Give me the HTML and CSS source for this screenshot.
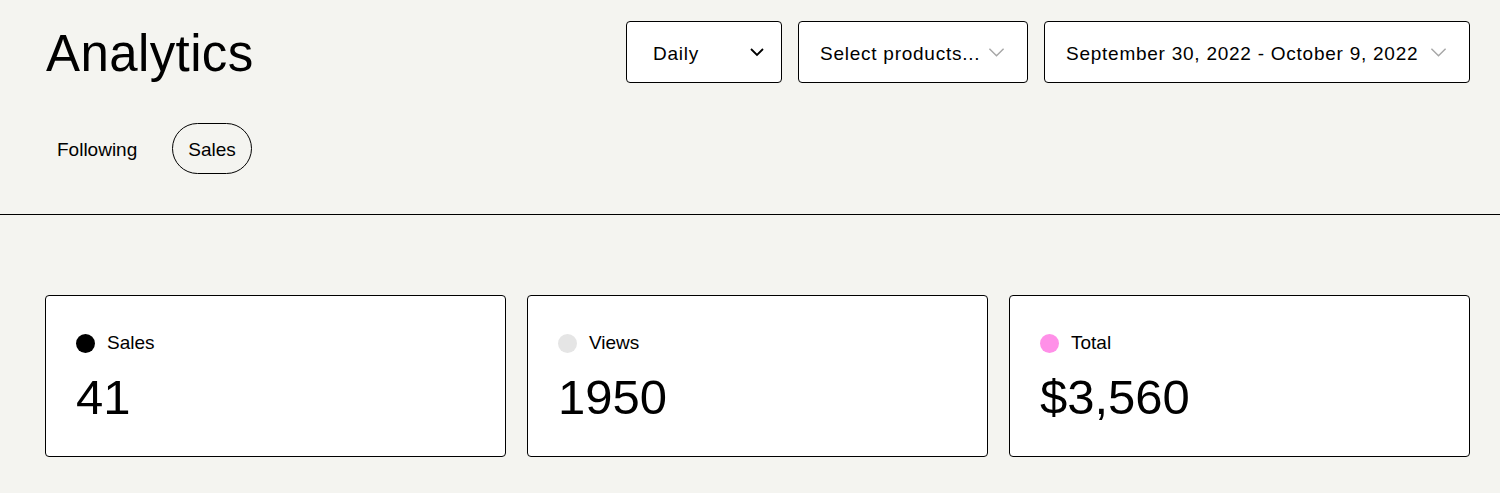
FILE: index.html
```html
<!DOCTYPE html>
<html lang="en">
<head>
<meta charset="utf-8">
<title>Analytics</title>
<link rel="stylesheet" href="styles.css">
</head>
<body>
<header class="page-header">
  <div class="header-row">
    <h1 class="title">Analytics</h1>
    <div class="filters">
      <div class="select select-daily">
        <span class="select-text">Daily</span>
        <svg class="chev chev-dark" viewBox="0 0 16 10" width="16" height="10"><path d="M2 2l6 6 6-6" fill="none" stroke="currentColor" stroke-width="1.8"/></svg>
      </div>
      <div class="select select-products">
        <span class="select-text">Select products...</span>
        <svg class="chev chev-light" viewBox="0 0 18 10" width="17" height="10"><path d="M1.5 1.5l7.5 7.5 7.5-7.5" fill="none" stroke="currentColor" stroke-width="1.5"/></svg>
      </div>
      <div class="select select-date">
        <span class="select-text">September 30, 2022 - October 9, 2022</span>
        <svg class="chev chev-light" viewBox="0 0 18 10" width="17" height="10"><path d="M1.5 1.5l7.5 7.5 7.5-7.5" fill="none" stroke="currentColor" stroke-width="1.5"/></svg>
      </div>
    </div>
  </div>
  <nav class="tabs">
    <a class="tab">Following</a>
    <a class="tab tab-active">Sales</a>
  </nav>
</header>
<main class="content">
  <section class="stats">
    <div class="card">
      <div class="card-label"><span class="dot dot-black"></span>Sales</div>
      <div class="card-value">41</div>
    </div>
    <div class="card">
      <div class="card-label"><span class="dot dot-gray"></span>Views</div>
      <div class="card-value">1950</div>
    </div>
    <div class="card">
      <div class="card-label"><span class="dot dot-pink"></span>Total</div>
      <div class="card-value">$3,560</div>
    </div>
  </section>
</main>
</body>
</html>
```

FILE: styles.css
```css
* { box-sizing: border-box; }

html, body {
  margin: 0;
  padding: 0;
  background: #f4f4f0;
  color: #000;
  font-family: "Liberation Sans", Arial, sans-serif;
}

.page-header {
  padding: 21px 30px 40px 46px;
  border-bottom: 1px solid #000;
}

.header-row {
  display: flex;
  justify-content: space-between;
  align-items: flex-start;
}

.title {
  margin: 0;
  font-weight: 400;
  font-size: 51px;
  letter-spacing: 0.4px;
  line-height: 66px;
}

.filters {
  display: flex;
  gap: 16px;
  margin-left: auto;
}

.select {
  display: flex;
  align-items: center;
  justify-content: space-between;
  height: 62px;
  background: #fff;
  border: 1px solid #000;
  border-radius: 4px;
  font-size: 19px;
  letter-spacing: 0.75px;
  padding: 0 22px 0 21px;
}

.select-text {
  padding-top: 3px;
}

.select-daily {
  width: 156px;
  padding: 0 16px 0 26px;
}
.select-products { width: 230px; }
.select-date { width: 426px; }

.chev { display: block; flex: none; }
.chev-dark { color: #000; }
.chev-light { color: #a6a6a6; }

.tabs {
  display: flex;
  gap: 19px;
  margin-top: 36px;
  margin-left: -5px;
}

.tab {
  font-size: 19px;
  line-height: 23px;
  padding: 14px 15px 12px;
  border: 1px solid transparent;
  border-radius: 999px;
}

.tab-active {
  border-color: #000;
}

.content {
  padding: 80px 30px 0 45px;
}

.stats {
  display: grid;
  grid-template-columns: repeat(3, 1fr);
  gap: 21px;
}

.card {
  background: #fff;
  border: 1px solid #000;
  border-radius: 4px;
  height: 162px;
  padding: 35px 30px 0;
}

.card-label {
  display: flex;
  align-items: center;
  gap: 12px;
  font-size: 19px;
  line-height: 24px;
}

.dot {
  width: 19px;
  height: 19px;
  border-radius: 50%;
  flex: none;
}
.dot-black { background: #000; }
.dot-gray { background: #e5e5e5; }
.dot-pink { background: #ff90e8; }

.card-value {
  margin-top: 14px;
  font-size: 49px;
  line-height: 56px;
}
```
